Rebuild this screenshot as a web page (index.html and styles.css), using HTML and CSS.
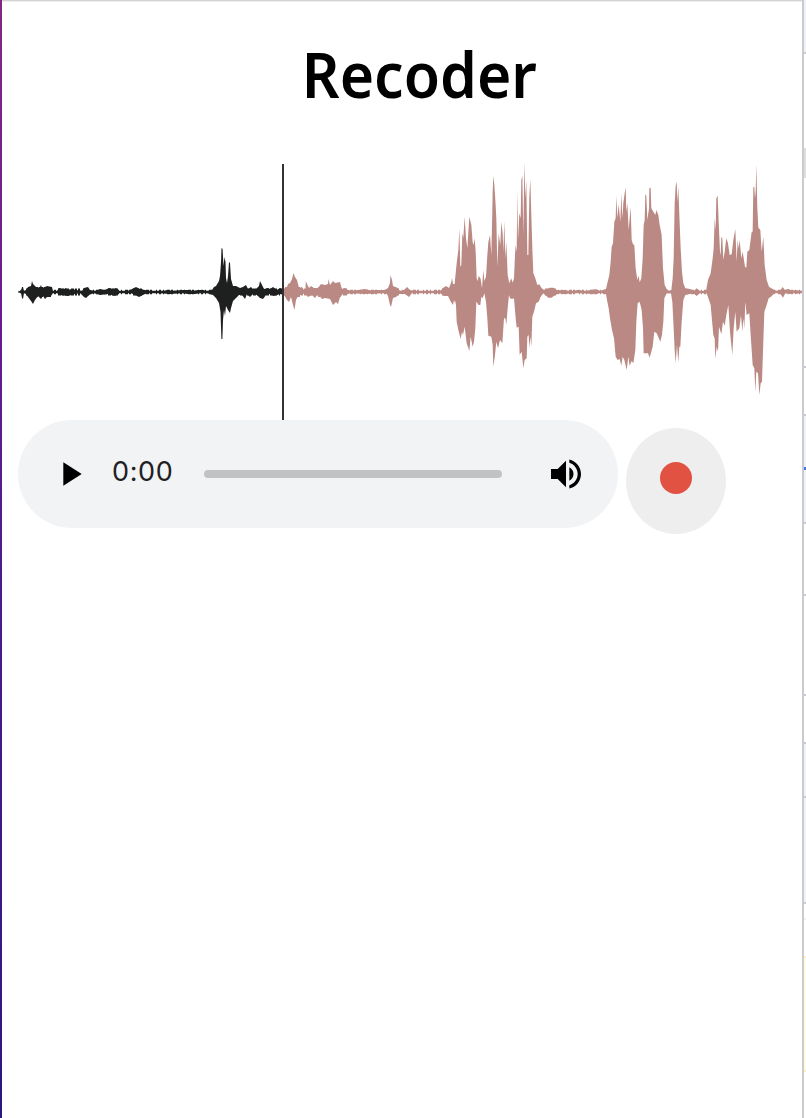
FILE: index.html
```html
<!DOCTYPE html>
<html lang="en">
<head>
<meta charset="utf-8">
<title>Recoder</title>
<link rel="stylesheet" href="styles.css">
</head>
<body>
<div class="window">
  <div class="edge-left"></div>
  <main class="page">
    <h1 class="title">Recoder</h1>
    <svg class="wave" viewBox="18 164 784 256" width="784" height="256">
      <polygon class="played" points="18,291.5 20,291 21.5,289 22,287 23,287 24,291 26,290 28,287 31,286 32,281 33,284 35,286 37,288 40,287 41,285 42,288 45,287 47,286 52,287 53,291 57,291 59,288 64,289 66,288 67,290 72,289 76,290 82,291 84,288 88,287 90,290 95,291 100,289 105,290 109,288 113,289 116,288 119,291 128,291 132,289 136,287 140,289 145,290 150,291 164,291 167,290 172,291 183,290 188,290 193,291 198,290 203,290 207,291 212,290 214,287 216,286 219,281 220,276 221,262 221.5,248 222.6,249 223.5,266 224.5,257 225.5,262 226,278 227,283 228,276 229,262 230,263 231,279 233,286 236,286 240,288 243,287 246,285 248,289 251,287 254,290 257,288 259,286 260,281 262,285 264,289 268,288 270,289 273,287 277,290 280,288 284,289 284,295 280,294 277,295 273,296 270,294 266,295 263,299 260,298 257,295 253,294 250,297 247,294 245,299 242,295 239,295 236,298 233,301 231,308 230,313 228,310 226,306 225,316 224,310 223,320 222.4,339 221.4,339 220.5,312 219,303 216,298 213,295 207,293 200,293 195,294 188,294 182,293 170,294 160,293 150,293 145,294 139,297 135,295 131,293 125,293 119,293 115,296 108,294 100,295 94,293 89,295 86,298 84,297 80,293 75,294 68,296 60,295 57,293 53,293 51,296 47,297 45,299 43,296 41,299 38,296 35,300 33,304 31,301 28,297 26,294 24,293 23,299 22,298 21,293 18,292.5"/>
      <g class="floor floor-played">
        <path class="base" d="M20 292H283"/>
        <path class="murmur" d="M54 292H283"/>
        <path class="swell" d="M26 292H52M58 292H80M83 292H90M108 292H118M133 292H142M214 292H280"/>
        <path class="crest" d="M28 292H52M215 292H237"/>
      </g>
      <polygon class="pending" points="284,289 287,287 288,284 290,283 292,279 293.5,273 295,277 297,280 299,288 302,287 304,290 305.5,289 305.8,281 307,284 309,288 311,286 314,288 318,288 321,284 325,285 328,284 328.5,279 330,285 333,281 335,283 340,282 341,286 342,289 345,288 348,290 352,291 358,290 365,289 373,291 375,290 385,290 388,288 390,283 390.5,275 392,280 393,286 398,288 400,291 404,290 407,287 410,290 415,291 440,291 443,288 446,286 449,288 451,283 452,278 453,284 455,284 455,303 454,300 453,305 451,302 448,296 444,296 440,293 412,293 409,297 405,294 399,294 396,297 393,298 391,307 390,305 388,296 386,293 365,294 350,293 346,295 342,294 340,297 338,304 336,302 333,305 330,299 325,298 322,299 318,294 315,298 312,295 308,297 305,293 301,295 298,296 296,300 294.5,310 293,305 291,297 289,302 287,300 284,295"/>
      <g class="floor floor-pending">
        <path class="base" d="M284 292H802"/>
        <path class="murmur" d="M300 292H455M540 292H606M683 292H709M770 292H800"/>
        <path class="swell" d="M284 292H347M388 292H400M442 292H456M545 292H558"/>
        <path class="crest" d="M285 292H301M318 292H341"/>
      </g>
      <polygon class="pending" transform="translate(430 155) scale(.33333)" points="74,385 80,325 85,285 88,220 91,335 94,330 97,235 100,248 104,185 108,250 112,280 118,185 124,210 128,262 131,270 134,250 137,290 140,370 143,378 146,362 152,372 156,400 160,345 163,378 168,365 172,300 175,262 180,240 184,300 187,165 188,110 190,62 193,90 196,135 199,190 202,335 206,235 211,270 214,200 218,235 220,290 223,198 226,310 229,260 233,360 238,385 244,370 248,383 252,370 255,300 257,270 260,290 262,105 264,255 268,175 272,190 274,75 277,62 280,240 283,20 286,130 289,75 292,300 295,300 298,125 301,72 304,180 307,280 310,355 316,370 322,390 328,388 335,400 343,405 350,402 360,398 370,398 380,405 390,406 405,405 415,408 430,408 445,404 460,408 470,408 480,405 480,416 460,415 435,413 420,415 405,418 390,415 375,420 365,428 355,428 340,415 332,425 326,440 318,445 312,470 307,485 304,575 301,545 298,580 296,540 292,545 290,610 284,615 280,640 275,590 269,600 266,515 260,518 257,490 252,430 247,432 240,430 237,420 233,460 229,510 226,490 222,490 217,565 210,555 204,580 199,560 195,600 190,636 188,570 184,545 175,542 172,490 168,440 163,415 158,430 154,425 151,450 146,450 139,440 136,520 132,560 128,575 122,545 118,588 110,565 104,515 99,540 96,530 92,552 85,525 80,500 78,450 74,432"/>
      <polygon class="pending" transform="translate(590 155) scale(.33333)" points="0,405 20,403 30,408 40,405 48,402 53,380 58,360 62,320 65,275 69,265 73,200 77,190 79,122 82,190 86,148 91,200 94,115 97,190 100,145 104,115 107,97 109,170 112,145 116,225 119,190 122,157 125,255 129,268 133,270 137,340 142,375 146,362 149,382 154,370 158,310 161,210 164,195 166,118 169,122 172,195 177,160 178,100 182,98 184,160 190,170 196,180 199,165 205,180 209,210 215,240 219,340 224,390 230,402 237,408 244,405 248,370 251,310 254,145 257,92 260,80 262,140 265,95 268,180 272,280 276,350 280,385 286,400 300,402 312,408 320,400 330,408 348,408 354,375 362,355 368,310 371,280 374,190 377,225 379,130 383,122 386,200 390,290 392,300 394,245 397,250 400,315 404,290 409,250 414,265 419,300 425,298 430,255 436,222 440,320 443,255 446,280 449,255 454,310 458,290 465,335 469,338 472,290 478,285 485,230 488,230 490,95 493,97 495,130 497,110 499,28 502,160 505,218 511,225 515,290 520,245 524,330 530,375 537,395 548,402 560,408 572,405 578,396 584,404 596,402 606,408 615,405 636,408 636,413 620,416 610,413 600,417 586,415 579,428 570,415 555,413 543,425 536,430 530,450 523,470 520,560 516,680 512,685 508,720 504,655 499,650 496,710 493,640 488,630 482,540 478,475 470,480 466,440 463,520 460,490 457,530 453,480 448,520 440,530 436,470 431,520 427,600 420,530 415,450 409,480 404,512 399,500 394,538 387,515 384,590 380,575 376,612 374,550 370,540 365,485 362,450 357,435 350,415 330,414 320,423 310,415 286,420 280,435 275,500 271,575 268,575 265,622 261,570 257,625 254,585 250,500 247,440 243,415 230,415 223,430 220,500 216,540 211,560 200,535 193,530 188,575 179,608 174,595 161,595 159,520 155,465 149,440 143,445 139,500 136,585 130,625 125,618 119,632 115,605 110,645 103,615 98,605 94,632 89,612 83,615 77,605 72,550 66,525 60,490 56,460 52,440 48,418 30,412 20,418 0,415"/>
      <rect class="cursor" x="282" y="164" width="2" height="256"/>
    </svg>
    <div class="controls">
      <div class="player">
        <svg class="icon" viewBox="0 0 24 24"><path d="M8 5v14l11-7z"/></svg>
        <span class="time">0:00</span>
        <div class="track"></div>
        <svg class="icon" viewBox="0 0 24 24"><path d="M3 9v6h4l5 5V4L7 9H3zm13.500 3c0-1.770-1.020-3.290-2.500-4.030v8.050c1.480-.73 2.500-2.250 2.500-4.020zM14 3.230v2.060c2.890.86 5 3.540 5 6.710s-2.110 5.850-5 6.710v2.060c4.010-.91 7-4.490 7-8.770s-2.990-7.860-7-8.770z"/></svg>
      </div>
      <button class="record" aria-label="Record"><span class="dot"></span></button>
    </div>
  </main>
  <div class="divider"></div>
  <div class="edge-right"></div>
</div>
</body>
</html>
```
FILE: styles.css
```css
body {
  margin: 0;
  background: #fff;
}
.window {
  display: flex;
  height: 1118px;
}
.edge-left {
  width: 2px;
  background: linear-gradient(#842784, #6b1d8c 25%, #4a1a8b 55%, #2c1680);
}
.page {
  box-sizing: border-box;
  width: 800px;
  padding-left: 16px;
  background: linear-gradient(#d4d4d4 1px, #ededed 1px 2px, #fff 2px);
}
.title {
  margin: 0;
  height: 164px;
  padding-top: 30px;
  padding-left: 20px;
  box-sizing: border-box;
  font: 600 63px/88px "Noto Sans", sans-serif;
  text-align: center;
  color: #000;
  transform: scaleX(.935);
}
.wave {
  display: block;
}
.played {
  fill: #1e201f;
}
.pending {
  fill: #bb8983;
}
.cursor {
  fill: #333;
}
/* Background noise that runs along the centre line */
.floor-played {
  stroke: #1e201f;
}
.floor-pending {
  stroke: #bb8983;
}
.base {
  stroke-width: 2.4;
}
.murmur {
  stroke-width: 4.4;
  stroke-dasharray: 2 2 1 3 3 1 2 4 1 2;
}
.swell {
  stroke-width: 7;
  stroke-dasharray: 3 1 2 1 4 2;
}
.crest {
  stroke-width: 10;
  stroke-dasharray: 2 1 4 1;
}
.controls {
  display: flex;
  align-items: flex-start;
  gap: 8px;
}
.player {
  box-sizing: border-box;
  display: flex;
  align-items: center;
  width: 600px;
  height: 108px;
  padding: 0 32px;
  border-radius: 54px;
  background: #f1f3f5;
}
.icon {
  flex: none;
  width: 40px;
  height: 40px;
}
.time {
  width: 92px;
  margin-left: 22px;
  padding-bottom: 5px;
  font: 27px/32px Inter, sans-serif;
  letter-spacing: .6px;
  color: #1f2022;
}
.track {
  width: 298px;
  height: 8px;
  margin-right: 44px;
  border-radius: 4px;
  background: #c1c2c4;
}
.record {
  display: flex;
  align-items: flex-start;
  justify-content: center;
  width: 100px;
  height: 106px;
  margin-top: 8px;
  padding: 34px 0 0;
  border: 0;
  border-radius: 50%;
  background: #eee;
}
.dot {
  width: 32px;
  height: 32px;
  border-radius: 50%;
  background: #e15242;
}
.divider {
  width: 2px;
  background: #cacacf;
}
/* Sliver of the neighbouring panel, one band per visible row */
.edge-right {
  width: 2px;
  background: linear-gradient(#f1f1f9 52px, #cacacf 52px 54px, #fff 54px 148px, #dedede 148px 178px, #fff 178px 366px, #cacacf 366px 368px, #fff 368px 414px, #cacacf 414px 416px, #f2f3f8 416px 467px, #3b78e7 467px 470px, #f2f3f8 470px 522px, #cacacf 522px 524px, #fff 524px 594px, #cacacf 594px 596px, #fff 596px 694px, #cacacf 694px 696px, #fff 696px 742px, #cacacf 742px 744px, #f2f3f8 744px 796px, #cacacf 796px 798px, #f2f3f8 798px 902px, #cacacf 902px 904px, #fff 904px 918px, #f0f0f0 918px 920px, #fff 920px 956px, #fff1bb 956px 958px, #fffbe5 958px 1070px, #fff1bb 1070px 1072px, #fff 1072px);
}
```
